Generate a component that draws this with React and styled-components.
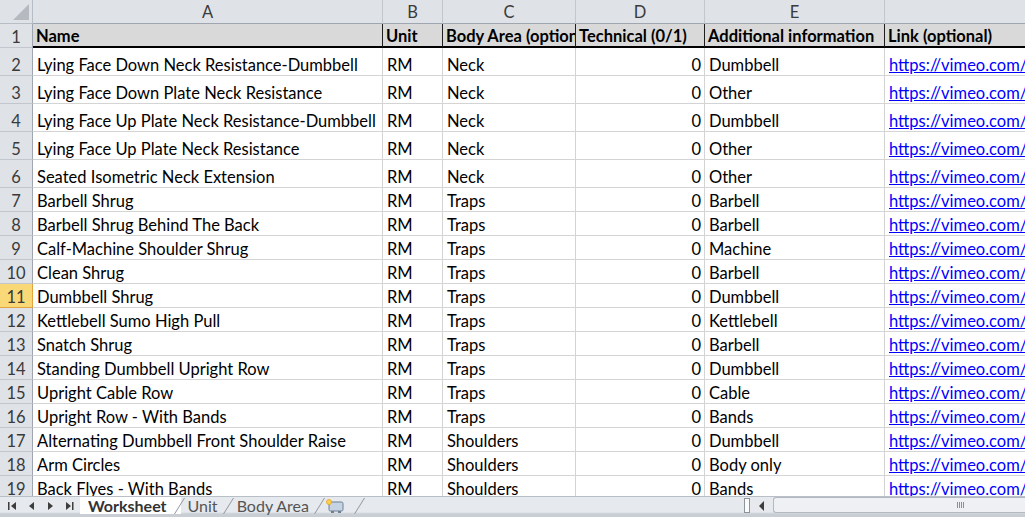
import React from "react";
import styled, { createGlobalStyle, css } from "styled-components";

const GlobalStyle = createGlobalStyle`
  html, body {
    margin: 0;
    padding: 0;
    overflow: hidden;
    background: #ffffff;
  }
  body {
    font-family: "Lato", "Open Sans", sans-serif;
  }
`;

const COLS = "33px 350px 60px 133px 129px 180px 300px";

const rows = [
  ["Lying Face Down Neck Resistance-Dumbbell", "RM", "Neck", "0", "Dumbbell", 28],
  ["Lying Face Down Plate Neck Resistance", "RM", "Neck", "0", "Other", 28],
  ["Lying Face Up Plate Neck Resistance-Dumbbell", "RM", "Neck", "0", "Dumbbell", 28],
  ["Lying Face Up Plate Neck Resistance", "RM", "Neck", "0", "Other", 28],
  ["Seated Isometric Neck Extension", "RM", "Neck", "0", "Other", 28],
  ["Barbell Shrug", "RM", "Traps", "0", "Barbell", 24],
  ["Barbell Shrug Behind The Back", "RM", "Traps", "0", "Barbell", 24],
  ["Calf-Machine Shoulder Shrug", "RM", "Traps", "0", "Machine", 24],
  ["Clean Shrug", "RM", "Traps", "0", "Barbell", 24],
  ["Dumbbell Shrug", "RM", "Traps", "0", "Dumbbell", 24],
  ["Kettlebell Sumo High Pull", "RM", "Traps", "0", "Kettlebell", 24],
  ["Snatch Shrug", "RM", "Traps", "0", "Barbell", 24],
  ["Standing Dumbbell Upright Row", "RM", "Traps", "0", "Dumbbell", 24],
  ["Upright Cable Row", "RM", "Traps", "0", "Cable", 24],
  ["Upright Row - With Bands", "RM", "Traps", "0", "Bands", 24],
  ["Alternating Dumbbell Front Shoulder Raise", "RM", "Shoulders", "0", "Dumbbell", 24],
  ["Arm Circles", "RM", "Shoulders", "0", "Body only", 24],
  ["Back Flyes - With Bands", "RM", "Shoulders", "0", "Bands", 24],
];

const Window = styled.div`
  width: 1025px;
  height: 517px;
  display: flex;
  flex-direction: column;
  overflow: hidden;
`;

const Sheet = styled.div`
  height: 496px;
  overflow: hidden;
`;

const Row = styled.div`
  display: grid;
  grid-template-columns: ${COLS};
  height: ${(p) => p.$h}px;
`;

const Corner = styled.div`
  background: #dfe3e8;
  border-right: 1px solid #b7bdc5;
  border-bottom: 1px solid #b7bdc5;
  position: relative;
  &::after {
    content: "";
    position: absolute;
    right: 3px;
    bottom: 3px;
    width: 0;
    height: 0;
    border-left: 16px solid transparent;
    border-bottom: 16px solid #b5bac1;
  }
`;

const ColHead = styled.div`
  background: #dfe3e8;
  border-right: 1px solid #c2c7ce;
  border-bottom: 1px solid #9fa6af;
  color: #3a3a3a;
  font-size: 16.5px;
  display: flex;
  align-items: center;
  justify-content: center;
  overflow: hidden;
`;

const RowHead = styled.div`
  background: ${(p) => (p.$sel ? "#f8d877" : "#dfe3e8")};
  border-right: 1px solid ${(p) => (p.$sel ? "#e2a53c" : "#9fa6af")};
  border-bottom: 1px solid ${(p) => (p.$sel ? "#e2a53c" : "#c2c7ce")};
  color: #3a3a3a;
  font-size: 16.5px;
  line-height: 19px;
  display: flex;
  align-items: flex-end;
  justify-content: center;
  box-sizing: border-box;
`;

const Cell = styled.div`
  border-right: 1px solid #d4d4d4;
  border-bottom: 1px solid #d4d4d4;
  font-size: 16.5px;
  line-height: 19px;
  color: #000;
  white-space: nowrap;
  overflow: hidden;
  display: flex;
  align-items: flex-end;
  justify-content: ${(p) => (p.$right ? "flex-end" : "flex-start")};
  padding: 0 3px 0 4px;
  box-sizing: border-box;
  min-width: 0;

  ${(p) =>
    p.$head &&
    css`
      background: #d9d9d9;
      font-weight: 700;
      border-right: 1px solid #1f1f1f;
      border-bottom: 2px solid #000;
      padding-left: 3px;
    `}

  ${(p) =>
    p.$link &&
    css`
      color: #0000ff;
      text-decoration: underline;
    `}
`;

const TabBar = styled.div`
  height: 21px;
  display: flex;
  align-items: stretch;
  background: linear-gradient(#e6e9ed 0, #e6e9ed 15px, #c9ced4 17px, #c9ced4 100%);
  border-top: 1px solid #b9bfc6;
  box-sizing: border-box;
  overflow: hidden;
`;

const Nav = styled.div`
  display: flex;
  align-items: center;
  gap: 10px;
  padding: 0 0 3px 8px;
  width: 72px;
`;

const NavBtn = styled.svg`
  width: 9px;
  height: 10px;
  fill: #3d3d3d;
`;

const Tabs = styled.div`
  display: flex;
  align-items: stretch;
  height: 17px;
`;

const Tab = styled.div`
  position: relative;
  font-size: 16px;
  line-height: 17px;
  padding: 0 ${(p) => (p.$active ? 14 : 12)}px 0 ${(p) => (p.$active ? 8 : 7)}px;
  color: ${(p) => (p.$active ? "#333" : "#555")};
  font-weight: ${(p) => (p.$active ? 700 : 400)};
  background: ${(p) => (p.$active ? "#ffffff" : "transparent")};
  &::after {
    content: "";
    position: absolute;
    right: 1px;
    top: 1px;
    height: 16px;
    border-left: 1px solid #8f969e;
    transform: skewX(-32deg);
  }
`;

const NewTab = styled(Tab)`
  padding: 0 16px 0 4px;
  display: flex;
  align-items: center;
`;

const TabSpacer = styled.div`
  flex: 1;
`;

const Splitter = styled.div`
  width: 6px;
  height: 15px;
  margin: 1px 1px 0 0;
  background: #fbfbfb;
  border: 1px solid #8c939b;
  box-sizing: border-box;
`;

const ArrowBtn = styled.div`
  width: 22px;
  display: flex;
  align-items: center;
  justify-content: center;
  padding-bottom: 3px;
`;

const Track = styled.div`
  width: 252px;
  height: 16px;
  background: #eef0f3;
  border: 1px solid #b3b9c0;
  border-right: none;
  border-radius: 3px 0 0 3px;
  box-sizing: border-box;
  display: flex;
  align-items: center;
  justify-content: flex-start;
  padding-left: 183px;
`;

const Grip = styled.div`
  width: 7px;
  height: 6px;
  background: repeating-linear-gradient(90deg, #8a9099 0 1px, transparent 1px 2px);
`;

export default function App() {
  return (
    <Window>
      <GlobalStyle />
      <Sheet>
        <Row $h={24}>
          <Corner />
          {["A", "B", "C", "D", "E", "F"].map((c) => (
            <ColHead key={c}>{c}</ColHead>
          ))}
        </Row>
        <Row $h={24}>
          <RowHead>1</RowHead>
          <Cell $head>Name</Cell>
          <Cell $head>Unit</Cell>
          <Cell $head>Body Area (optional)</Cell>
          <Cell $head>Technical (0/1)</Cell>
          <Cell $head>Additional information</Cell>
          <Cell $head>Link (optional)</Cell>
        </Row>
        {rows.map(([name, unit, area, tech, info, h], i) => (
          <Row key={name} $h={h}>
            <RowHead $sel={i + 2 === 11}>{i + 2}</RowHead>
            <Cell>{name}</Cell>
            <Cell>{unit}</Cell>
            <Cell>{area}</Cell>
            <Cell $right>{tech}</Cell>
            <Cell>{info}</Cell>
            <Cell $link>https://vimeo.com/</Cell>
          </Row>
        ))}
      </Sheet>
      <TabBar>
        <Nav>
          <NavBtn viewBox="0 0 9 10">
            <rect x="0" y="1" width="1.5" height="8" />
            <path d="M8 1 L3 5 L8 9 Z" />
          </NavBtn>
          <NavBtn viewBox="0 0 9 10">
            <path d="M7 1 L2 5 L7 9 Z" />
          </NavBtn>
          <NavBtn viewBox="0 0 9 10">
            <path d="M2 1 L7 5 L2 9 Z" />
          </NavBtn>
          <NavBtn viewBox="0 0 9 10">
            <path d="M1 1 L6 5 L1 9 Z" />
            <rect x="7" y="1" width="1.5" height="8" />
          </NavBtn>
        </Nav>
        <Tabs>
          <Tab $active>Worksheet</Tab>
          <Tab>Unit</Tab>
          <Tab>Body Area</Tab>
          <NewTab>
            <svg width="20" height="15" viewBox="0 0 20 15">
              <rect x="4" y="4" width="14" height="9" rx="1.5" fill="#c6d3e3" stroke="#6f7f93" />
              <rect x="6" y="13" width="3" height="2" fill="#6f7f93" />
              <rect x="13" y="13" width="3" height="2" fill="#6f7f93" />
              <circle cx="4" cy="4" r="2.5" fill="#ffd34d" stroke="#e6a21a" strokeWidth="0.8" />
            </svg>
          </NewTab>
        </Tabs>
        <TabSpacer />
        <Splitter />
        <ArrowBtn>
          <svg width="6" height="10" viewBox="0 0 6 10">
            <path d="M5 0 L0 5 L5 10 Z" fill="#3d3d3d" />
          </svg>
        </ArrowBtn>
        <Track>
          <Grip />
        </Track>
      </TabBar>
    </Window>
  );
}
